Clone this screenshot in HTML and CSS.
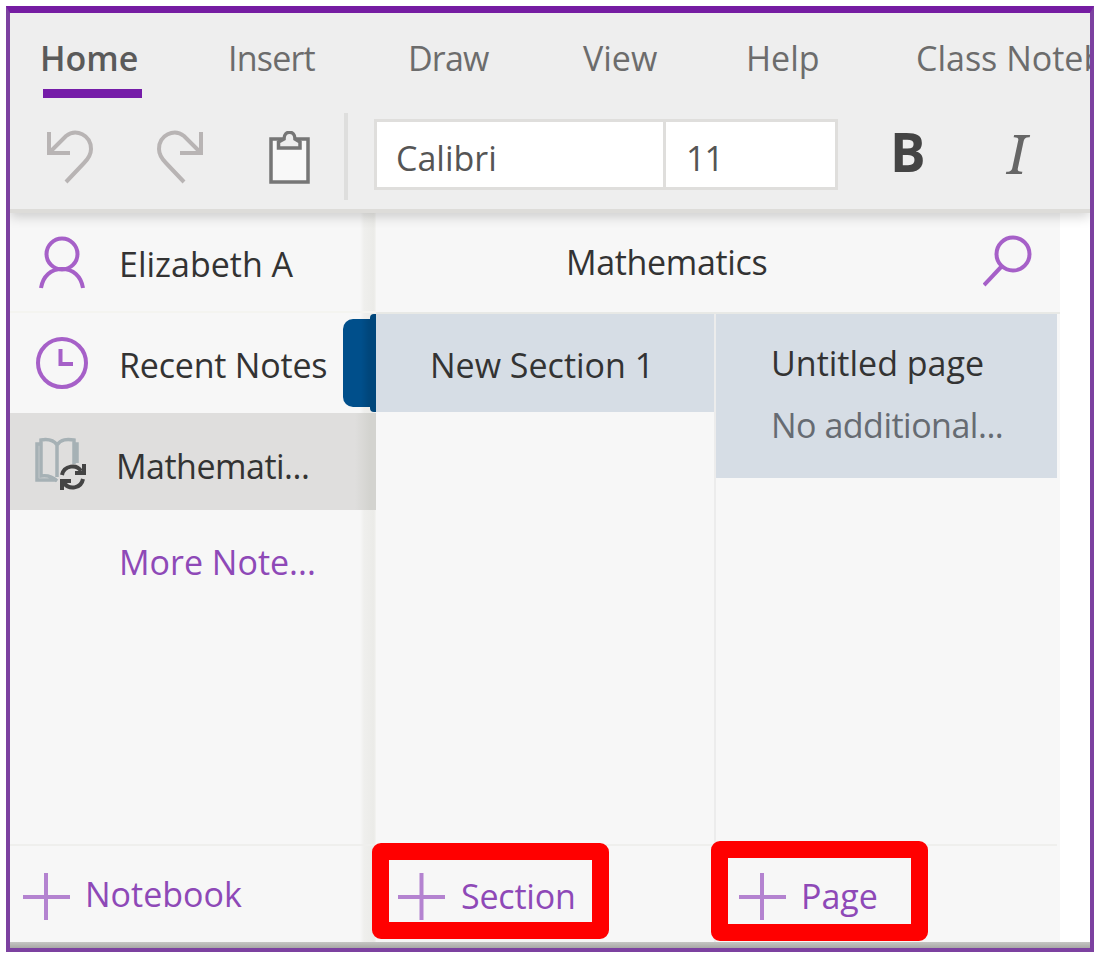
FILE: index.html
```html
<!DOCTYPE html>
<html lang="en">
<head>
<meta charset="utf-8">
<title>Notebook</title>
<link rel="stylesheet" href="styles.css">
</head>
<body>
<div class="window">
  <header class="ribbon">
    <nav class="tabs">
      <a class="tab tab-active">Home</a>
      <a class="tab tab-insert">Insert</a>
      <a class="tab tab-draw">Draw</a>
      <a class="tab">View</a>
      <a class="tab">Help</a>
      <a class="tab">Class Noteb</a>
    </nav>
    <div class="tools">
      <svg class="tool-undo" width="50" height="56" viewBox="0 0 50 56"><path d="M3 3V24H24M3 24L20 7C30-1 45 6 45 20C45 26 42 30 38 34L20 53"/></svg>
      <svg class="tool-redo" width="50" height="56" viewBox="0 0 50 56"><path d="M45 3V24H24M45 24L28 7C18-1 3 6 3 20C3 26 6 30 10 34L28 53"/></svg>
      <svg class="tool-paste" width="42" height="54" viewBox="0 0 42 54"><path class="board" d="M3 8H40V51H3Z"/><path class="clip" d="M10.500 17V11L16 8C16-1 27-1 27 8L32 11V17Z"/></svg>
      <span class="divider"></span>
      <div class="font-box"><span class="font-name">Calibri</span><span class="font-size">11</span></div>
      <b class="bold">B</b>
      <i class="italic">I</i>
    </div>
  </header>
  <main class="body">
    <aside class="nav">
      <div class="nav-row account">
        <svg width="50" height="56" viewBox="0 0 50 56"><circle cx="25" cy="19" r="15.500"/><path d="M4 53C6 41 14 34 25 34S44 41 46 53"/></svg>
        <span>Elizabeth A</span>
      </div>
      <div class="nav-row recent">
        <svg width="54" height="54" viewBox="0 0 54 54"><circle cx="27" cy="27" r="24"/><path d="M25.500 13V28H38"/></svg>
        <span>Recent Notes</span>
      </div>
      <div class="nav-row current">
        <svg width="54" height="56" viewBox="0 0 54 56">
          <path class="book" d="M22 8C18 2 12 2 6 3V39C13 38 18 40 22 44M22 8C26 2 32 2 39 3V27M22 8V40M6 7H2V43H22M39 7H42V26"/>
          <path class="sync" d="M27 38C29 28 42 27 46 34M49 27V36H40M48 42C46 52 34 53 29 46M27 53V44H36"/>
        </svg>
        <span>Mathemati...</span>
      </div>
      <div class="nav-row more"><span>More Note...</span></div>
      <button class="add add-notebook"><svg width="48" height="48" viewBox="0 0 48 48"><path d="M23 1V48M0 25H47"/></svg>Notebook</button>
    </aside>
    <section class="panel">
      <div class="panel-head">
        <h1>Mathematics</h1>
        <svg width="50" height="54" viewBox="0 0 50 54"><circle cx="30" cy="21" r="16.500"/><path d="M19 33L1 52"/></svg>
      </div>
      <div class="columns">
        <div class="sections">
          <div class="section-item"><span class="section-tab"></span>New Section 1</div>
          <button class="add add-section"><svg width="48" height="48" viewBox="0 0 48 48"><path d="M23.500 1V48M0 25H47"/></svg>Section<span class="mark"></span></button>
        </div>
        <div class="pages">
          <div class="page-item"><div>Untitled page</div><div class="preview">No additional...</div></div>
          <button class="add add-page"><svg width="48" height="48" viewBox="0 0 48 48"><path d="M24 1V48M1 25H48"/></svg>Page<span class="mark"></span></button>
        </div>
      </div>
    </section>
  </main>
  <div class="bottom-edge"></div>
</div>
</body>
</html>
```

FILE: styles.css
```css
* { box-sizing: border-box; }

body {
  margin: 0;
  padding: 6px 7px 5px 6px;
  height: 957px;
  background: #fff;
  color: #333;
  font: 34px/46px "Open Sans", "Noto Sans", sans-serif;
  overflow: hidden;
}

svg { display: block; flex: none; fill: none; stroke: #a660c8; stroke-width: 4; }

.window {
  display: flex;
  flex-direction: column;
  height: 946px;
  border: 4px solid #7c41a0;
  border-top: 7px solid #751ca2;
  overflow: hidden;
  background: #fff;
}

/* Ribbon */
.ribbon {
  position: relative;
  z-index: 2;
  flex: none;
  height: 200px;
  background: #eee;
  border-bottom: 4px solid #dddcd9;
  box-shadow: 0 4px 11px rgba(0, 0, 0, .17);
}
.tabs {
  display: grid;
  grid-template-columns: 188px 180px 175px 163px 170px 200px;
  height: 88px;
  padding: 22px 0 0 30px;
  color: #6c6c6c;
}
.tab { justify-self: start; white-space: nowrap; }
.tab-insert { letter-spacing: -.8px; }
.tab-draw { letter-spacing: -.8px; }
.tab-active {
  height: 64px;
  color: #5a5a5a;
  font-weight: 600;
  display: flex;
  flex-direction: column;
}
.tab-active::after {
  content: "";
  width: 99px;
  height: 9px;
  margin: 8px 0 0 3px;
  background: #751ca8;
}
.tools { display: flex; align-items: flex-start; height: 108px; padding-left: 36px; }
.tool-undo, .tool-redo { margin-top: 28px; stroke: #b8b4b4; }
.tool-redo { margin-left: 60px; }
.tool-paste { margin: 30px 0 0 62px; stroke: #767676; stroke-width: 3.5; }
.tool-paste .board { fill: #f8f8f8; }
.tool-paste .clip { fill: #eee; }
.divider { width: 4px; height: 87px; margin: 12px 0 0 34px; background: #dededd; }
.font-box {
  display: flex;
  width: 464px;
  height: 71px;
  margin: 18px 0 0 26px;
  background: #fff;
  border: 3px solid #dfdedc;
  line-height: 73px;
  color: #555;
}
.font-name { width: 289px; padding-left: 19px; border-right: 3px solid #dfdedc; }
.font-size { padding-left: 20px; letter-spacing: -1px; }
.bold { width: 60px; margin: 21px 0 0 52px; font-size: 53px; line-height: 60px; color: #444; }
.italic { margin: 22px 0 0 57px; font: italic 55px/60px "Noto Serif", "Liberation Serif", serif; color: #666; }

/* Body */
.body { display: flex; flex: 1; min-height: 0; }
.nav {
  display: flex;
  flex-direction: column;
  width: 366px;
  background: linear-gradient(90deg, transparent 350px, #efefed 354px, #ebebe8 364px, #f4f4f2 366px) #f7f7f7;
}
.nav-row { display: flex; align-items: center; height: 100px; }
.account { padding: 1px 0 0 27px; border-bottom: 2px solid #f4f4f0; }
.account span { margin-left: 32px; padding-top: 2px; }
.recent { padding-left: 25px; }
.recent span { margin-left: 30px; padding-top: 3px; letter-spacing: -.2px; }
.current {
  height: 97px;
  padding-left: 25px;
  background: linear-gradient(90deg, transparent 345px, #d3d3cf 360px) #dfdedd;
}
.current span { margin-left: 27px; padding-top: 8px; letter-spacing: -.5px; }
.current svg { margin-top: 6px; }
.current .book { stroke: #a6b1b5; stroke-width: 3.5; }
.current .sync { stroke: #444; stroke-width: 4; }
.more { padding: 4px 0 0 109px; color: #8e49b7; }

.panel { display: flex; flex-direction: column; width: 684px; background: #f7f7f7; }
.panel-head { display: flex; height: 101px; border-bottom: 2px solid #e8e9e6; }
.panel-head h1 { width: 416px; margin: 26px 0 0 190px; font: inherit; letter-spacing: -.35px; }
.panel-head svg { margin: 20px 0 0 1px; }
.columns { display: grid; grid-template-columns: 340px 341px; flex: 1; }
.sections, .pages { display: flex; flex-direction: column; }
.sections { border-right: 2px solid #ececec; }
.section-item {
  position: relative;
  height: 98px;
  padding: 28px 0 0 54px;
  background: #d6dde5;
}
.section-tab {
  position: absolute;
  left: -33px;
  top: 5px;
  width: 33px;
  height: 88px;
  border-radius: 10px 0 0 10px;
  background: linear-gradient(90deg, #004f8b 18px, #00467b 26px);
}
.section-tab::after {
  content: "";
  position: absolute;
  right: 0;
  top: -5px;
  width: 6px;
  height: 98px;
  border-radius: 4px 0 0 4px;
  background: #00467b;
}
.page-item { height: 164px; padding: 26px 0 0 55px; background: #d6dde5; }
.preview { margin-top: 16px; color: #666b72; letter-spacing: -.5px; }

.add {
  position: relative;
  display: flex;
  height: 98px;
  margin: auto 0 0;
  padding: 25px 0 0 22px;
  border: 0;
  border-top: 2px solid #efefed;
  background: none;
  color: #8e49b7;
  font: inherit;
  text-align: left;
}
.add svg { margin: 1px 14px 0 0; stroke: #b483d0; }
.add-notebook { padding-left: 13px; }
.add-section, .add-page { padding-top: 27px; }
.add-section svg, .add-page svg { margin-top: -1px; margin-right: 15px; }
.add-section { letter-spacing: -.2px; }

/* Red highlight frames around the add buttons */
.mark { position: absolute; border: 17px solid #f00; border-radius: 9px; }
.add-section .mark { left: -4px; top: -3px; width: 237px; height: 96px; }
.add-page .mark { left: -5px; top: -5px; width: 217px; height: 100px; }

.bottom-edge { flex: none; height: 6px; background: linear-gradient(#c5c5c3, #a8a8a6); }
```
